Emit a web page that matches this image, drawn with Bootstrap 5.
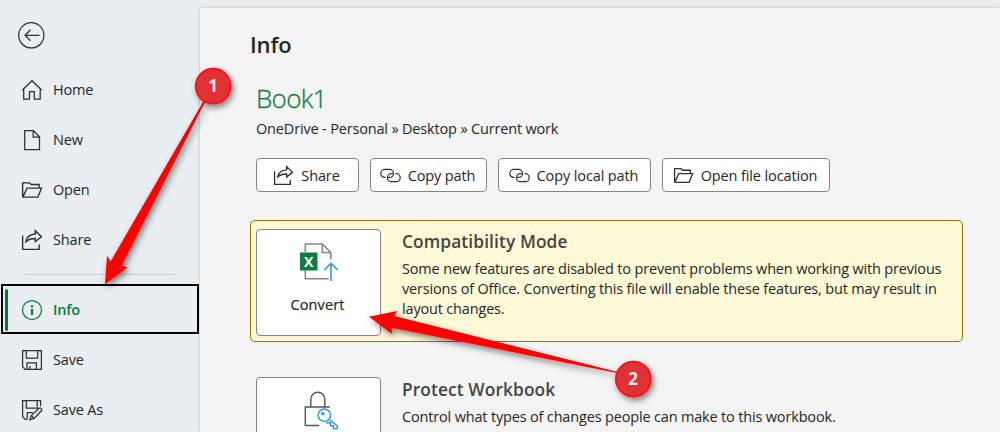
<!DOCTYPE html>
<html lang="en">
<head>
<meta charset="utf-8">
<meta name="viewport" content="width=device-width, initial-scale=1">
<title>Info</title>
<link href="https://cdn.jsdelivr.net/npm/bootstrap@5.3.0/dist/css/bootstrap.min.css" rel="stylesheet">
<style>
body{background:#e8eef2;color:#262626;font-family:"Open Sans","Noto Sans",sans-serif;font-size:14.5px;letter-spacing:-.17px;line-height:20px;height:432px}
svg{fill:none;stroke:#303030;stroke-width:1.25;flex:none}
.side{width:200px}
.back{margin:21px 0 0 17px;height:29px}
.menu{margin-top:14px}
.item{height:50px;padding-left:21px;gap:10px;color:#262626;text-decoration:none}
.item{padding-top:1px}
.rule{height:1px;background:#c9cdd0;margin:10px 25px 9px}
.current{height:50px;width:198px;margin-left:1px;border:2px solid #000;padding-left:18px;color:#107c41;font-weight:600;letter-spacing:-.2px;position:relative}
.current::before{content:"";position:absolute;left:2px;top:3px;width:3px;height:42px;border-radius:2px;background:#0f703b}
.current svg{stroke:#107c41}
.main{margin-top:8px;background:#f4f4f4;box-shadow:0 0 3px #0003;padding:21px 0 0 50px}
.title{font-size:22px;line-height:30px;font-weight:600;margin:0;letter-spacing:-.1px}
.book{font-size:26px;line-height:34px;font-weight:300;color:#107c41;-webkit-text-stroke:.3px #107c41;margin:22px 0 0 6px;letter-spacing:-.7px}
.path{margin:4px 0 0 6px;letter-spacing:-.17px}
.tools{margin:19px 0 0 6px;gap:11px}
.tool{height:34px;border:1px solid #858585;border-radius:4px;background:#fff;padding:1px 2px 0 0;gap:7px;color:#262626;font-size:14.5px;letter-spacing:-.12px}
.w1{width:103px}.w2{width:117px}.w3{width:153px}.w4{width:168px}
.notice{width:713px;height:122px;margin-top:28px;padding:8px 5px;border:1px solid #957500;border-radius:5px;background:#fef9d6}
.plain{border-color:transparent;background:none;margin-top:26px}
.tile{width:125px;height:107px;border:1px solid #858585;border-radius:4px;background:#fff;padding:12px 2px 0 0;font-size:14.5px;line-height:22px;color:#262626;-webkit-text-stroke:.2px #262626;letter-spacing:.1px;flex:none}
.copy{padding-left:21px;padding-top:1px}
.copy h2{font-size:17.3px;line-height:24px;font-weight:600;color:#444;margin:0 0 5px;letter-spacing:.12px}
.overlay{position:absolute;left:0;top:0;pointer-events:none}
.overlay text{font:bold 17px "Open Sans",sans-serif;fill:#fde9e9;stroke:none;text-anchor:middle}
</style>
</head>
<body class="overflow-hidden position-relative">
<svg width="0" height="0" class="position-absolute">
<defs>
<symbol id="share" viewBox="0 0 20 20"><path d="M1.5 6v12.5h15V14M4.5 11.5c.8-5 4-6.7 8.5-6.9V1.5L18.6 7 13 11.5V8.6c-4 0-6.2.6-8.5 2.9z"/></symbol>
<symbol id="folder" viewBox="0 0 20 20"><path d="M1.5 16.5v-13h6l2 1.5h7v3.3M1.7 16.5 5.5 8.3h13.2l-3.4 8.2H1.5"/></symbol>
<symbol id="link" viewBox="0 0 21 20"><path d="M5.5 11.4H4.8a4 4 0 0 1 0-8h4.7a4 4 0 0 1 0 8H8.4M15.5 7.7h.7a4 4 0 0 1 0 8h-4.7a4 4 0 0 1 0-8h1.1"/></symbol>
</defs>
</svg>
<div class="d-flex h-100 overflow-hidden">
<nav class="side flex-shrink-0">
<div class="back"><svg class="d-block" width="29" height="29" viewBox="0 0 29 29" stroke-width="1.4"><circle cx="14.3" cy="14.3" r="12.6"/><path d="M22.5 14.3H8M13.5 8.8 8 14.3l5.5 5.5"/></svg></div>
<div class="menu d-flex flex-column">
<a class="item d-flex align-items-center" href="#"><svg width="22" height="22" viewBox="0 0 22 22"><path d="M1.2 11.2 11 1.7l9.8 9.5M2.7 9.8v10.4h5.8v-7.5h4.8v7.5h5.9V9.8"/></svg><span>Home</span></a>
<a class="item d-flex align-items-center" href="#"><svg width="22" height="22" viewBox="0 0 22 22"><path d="M3.7 1.7h8.8l6 6v13H3.7zM12.2 1.7V8h6.3"/></svg><span>New</span></a>
<a class="item d-flex align-items-center" href="#"><svg width="22" height="22" viewBox="0 0 20 20"><use href="#folder"/></svg><span>Open</span></a>
<a class="item d-flex align-items-center" href="#"><svg width="22" height="22" viewBox="0 0 20 20"><use href="#share"/></svg><span>Share</span></a>
<div class="rule"></div>
<a class="item current d-flex align-items-center" href="#"><svg width="22" height="22" viewBox="0 0 22 22"><circle cx="11" cy="11" r="9.5"/><path stroke-width="2.3" d="M11 6v2.2M11 9.8v6.2"/></svg><span>Info</span></a>
<a class="item d-flex align-items-center" href="#"><svg width="22" height="22" viewBox="0 0 22 22"><path d="M1.6 1.6h18.8v18.8H4.2l-2.6-2.6zM5.3 1.8v7.4h11.4V1.8M6 20.2v-6.4h9.4v6.4M8.8 17v3"/></svg><span>Save</span></a>
<a class="item d-flex align-items-center" href="#"><svg width="22" height="22" viewBox="0 0 22 22"><path d="M19.6 7V1.6h-18v16.2l2.6 2.6h2.2M5.3 1.8v7.4h10.9V1.8M6.3 19.8v-6.3h5.5M9 20.8l1.3-4.3L18 9.3c1.5-1 3.5.9 2.4 2.5l-7.3 7.6zM10.3 16.5l2.8 2.9"/></svg><span>Save As</span></a>
</div>
</nav>
<main class="main flex-grow-1">
<h1 class="title">Info</h1>
<div class="book">Book1</div>
<div class="path">OneDrive - Personal » Desktop » Current work</div>
<div class="tools d-flex">
<button class="tool w1 btn d-flex align-items-center justify-content-center"><svg width="21" height="21" viewBox="0 0 20 20"><use href="#share"/></svg><span>Share</span></button>
<button class="tool w2 btn d-flex align-items-center justify-content-center"><svg width="21" height="20" viewBox="0 0 21 20"><use href="#link"/></svg><span>Copy path</span></button>
<button class="tool w3 btn d-flex align-items-center justify-content-center"><svg width="21" height="20" viewBox="0 0 21 20"><use href="#link"/></svg><span>Copy local path</span></button>
<button class="tool w4 btn d-flex align-items-center justify-content-center"><svg width="21" height="21" viewBox="0 0 20 20"><use href="#folder"/></svg><span>Open file location</span></button>
</div>
<section class="notice d-flex">
<button class="tile btn d-flex flex-column align-items-center"><svg width="40" height="40" viewBox="0 0 40 40"><path fill="#fafafa" stroke="#858585" stroke-width="1.5" d="M7.3 10V2h17l8.5 8.5v7M7.3 28v8.8h23.5M24.3 2v8.5h8.5"/><path fill="#107c41" stroke="none" d="M2 10.5h17.5v18H2z"/><text x="10.8" y="24.5" text-anchor="middle" font-family="Open Sans" font-weight="700" font-size="14" fill="#fff" stroke="none">X</text><path stroke="#2b94d8" stroke-width="1.5" d="M33 39V21.2M26.3 28l6.7-6.8 6.7 6.8"/></svg><span class="mt-1 pt-2">Convert</span></button>
<div class="copy"><h2>Compatibility Mode</h2><div>Some new features are disabled to prevent problems when working with previous<br>versions of Office. Converting this file will enable these features, but may result in<br>layout changes.</div></div>
</section>
<section class="notice plain d-flex">
<button class="tile btn d-flex flex-column align-items-center"><svg width="40" height="40" viewBox="0 0 40 40"><path stroke="#555" stroke-width="1.4" d="M12.8 16.5V9.2a7 7 0 0 1 14 0v7.3M31.8 17H7.3v18.5h14"/><g stroke="#2b94d8" stroke-width="1.4"><path fill="#fff" d="M30 28.5 39.5 36v2.5h-4v-2.8h-3v-3h-4.5"/><circle cx="26.3" cy="25.2" r="6.2" fill="#fff"/><circle cx="24.8" cy="23.6" r="1" fill="#2b94d8"/></g></svg></button>
<div class="copy"><h2>Protect Workbook</h2><div>Control what types of changes people can make to this workbook.</div></div>
</section>
</main>
</div>
<svg class="overlay" width="1000" height="432" viewBox="0 0 1000 432">
<defs><filter id="shade" x="-20%" y="-20%" width="150%" height="150%"><feDropShadow dx="2" dy="3" stdDeviation="3" flood-opacity=".5"/></filter></defs>
<g filter="url(#shade)" stroke="none" fill="#f00"><path d="M105 284.5 107 255.7 110.7 261.3 203.3 101.5 205 102 121.7 265.7 127.7 267.3z"/><path d="M369 316.7 397.3 311 394.3 316 617 371.7 617 373 391.7 327.7 392 334z"/></g>
<g filter="url(#shade)" fill="#e03034" stroke="#fb1115" stroke-width="1.7"><circle cx="213.2" cy="86.2" r="17.5"/><circle cx="633.3" cy="379.1" r="17.5"/></g>
<text x="213" y="92.2">1</text><text x="633" y="385.2">2</text>
</svg>
<script src="https://cdn.jsdelivr.net/npm/bootstrap@5.3.0/dist/js/bootstrap.bundle.min.js"></script>
</body>
</html>
